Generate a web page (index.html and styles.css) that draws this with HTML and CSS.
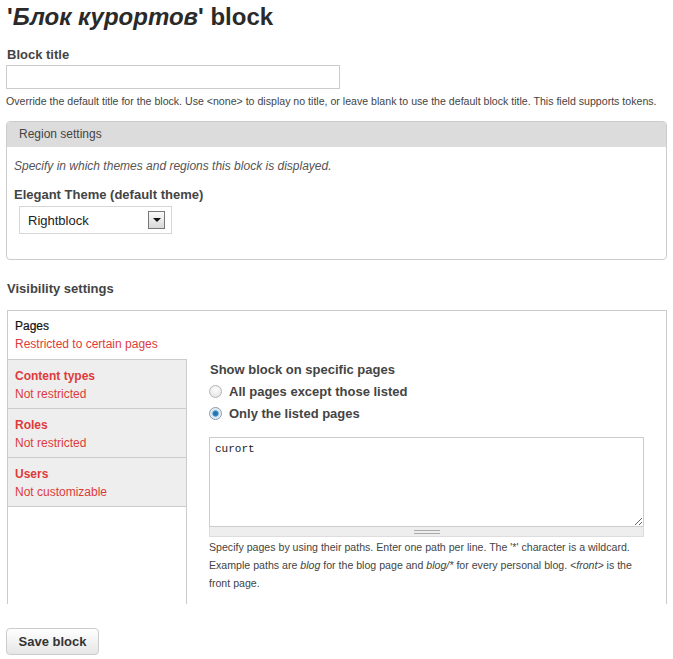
FILE: index.html
```html
<!DOCTYPE html>
<html lang="ru">

<head>
    <meta charset="UTF-8">
    <title>'Блок курортов' block</title>
    <link rel="stylesheet" href="styles.css">
</head>

<body>
    <div class="page">
        <h1>'<em>Блок курортов</em>' block</h1>

        <div class="form-item">
            <label class="label">Block title</label>
            <input class="text" type="text" value="">
            <div class="desc">Override the default title for the block. Use &lt;none&gt; to display no title, or leave blank to use the default block title. This field supports tokens.</div>
        </div>

        <div class="fieldset">
            <div class="legend">Region settings</div>
            <div class="fieldset-body">
                <p class="help">Specify in which themes and regions this block is displayed.</p>
                <label class="label">Elegant Theme (default theme)</label>
                <div class="select">
                    <span>Rightblock</span>
                    <span class="arrow"></span>
                </div>
            </div>
        </div>

        <h2>Visibility settings</h2>

        <div class="vtabs">
            <div class="vtabs-list">
                <ul>
                    <li class="active"><strong>Pages</strong><span>Restricted to certain pages</span></li>
                    <li><strong>Content types</strong><span>Not restricted</span></li>
                    <li><strong>Roles</strong><span>Not restricted</span></li>
                    <li><strong>Users</strong><span>Not customizable</span></li>
                </ul>
                <div class="filler"></div>
            </div>
            <div class="vtabs-pane">
                <div class="label">Show block on specific pages</div>
                <div class="radio-row"><span class="radio"></span>All pages except those listed</div>
                <div class="radio-row"><span class="radio checked"></span>Only the listed pages</div>
                <textarea class="pages" spellcheck="false">curort</textarea>
                <div class="grip"><span></span></div>
                <div class="desc pane-desc">Specify pages by using their paths. Enter one path per line. The '*' character is a wildcard. Example paths are <em>blog</em> for the blog page and <em>blog/*</em> for every personal blog. <em>&lt;front&gt;</em> is the front page.</div>
            </div>
        </div>

        <button class="btn">Save block</button>
    </div>
</body>

</html>
```

FILE: styles.css
```css
* {
    margin: 0;
    padding: 0;
    box-sizing: border-box;
}

body {
    font-family: "Liberation Sans", Arial, sans-serif;
    color: #333;
    background: #fff;
}

.page {
    padding: 5px 7px 0 6px;
}

h1 {
    font-size: 24px;
    line-height: 24px;
    color: #2a2a2a;
    padding-left: 1px;
}

h1 em {
    font-style: italic;
}

.form-item {
    margin-top: 18px;
}

.label {
    display: block;
    font-size: 13px;
    font-weight: bold;
    line-height: 16px;
    color: #444;
    padding-left: 1px;
}

input.text {
    display: block;
    width: 334px;
    height: 24px;
    margin-top: 2px;
    border: 1px solid #ccc;
    font-size: 13px;
    padding: 0 4px;
}

.desc {
    font-size: 10.6px;
    line-height: 18px;
    color: #444;
    margin-top: 3px;
}

/* region settings */
.fieldset {
    margin-top: 11px;
    border: 1px solid #ccc;
    border-radius: 4px;
    width: 661px;
    height: 139px;
    overflow: hidden;
}

.legend {
    background: #dcdcdc;
    height: 25px;
    line-height: 24px;
    padding-left: 12px;
    font-size: 12px;
    color: #444;
}

.fieldset-body {
    padding: 11px 7px 0 7px;
}

.help {
    font-size: 12px;
    font-style: italic;
    color: #555;
    line-height: 16px;
}

.fieldset-body .label {
    margin-top: 13px;
    padding-left: 0;
}

.select {
    display: flex;
    align-items: center;
    justify-content: space-between;
    width: 153px;
    height: 28px;
    margin: 3px 0 0 5px;
    border: 1px solid #d6d6d6;
    padding: 0 6px 0 8px;
    font-size: 13px;
    color: #222;
}

.select .arrow {
    width: 17px;
    height: 18px;
    border: 1px solid #777;
    background: linear-gradient(#fafafa, #d8d8d8);
    position: relative;
}

.select .arrow::after {
    content: "";
    position: absolute;
    left: 4px;
    top: 6px;
    border-left: 4px solid transparent;
    border-right: 4px solid transparent;
    border-top: 4px solid #111;
}

h2 {
    font-size: 13px;
    line-height: 16px;
    color: #444;
    margin-top: 21px;
    padding-left: 1px;
}

/* vertical tabs */
.vtabs {
    display: flex;
    width: 660px;
    height: 294px;
    margin: 13px 0 0 1px;
    border: 1px solid #ccc;
    border-bottom: none;
}

.vtabs-list {
    width: 179px;
    display: flex;
    flex-direction: column;
}

.vtabs-list ul {
    list-style: none;
}

.vtabs-list li {
    height: 49px;
    padding: 7px 0 0 7px;
    background: #eee;
    border-top: 1px solid #ccc;
    border-right: 1px solid #ccc;
    font-size: 12px;
    line-height: 18px;
    color: #dd3b3b;
}

.vtabs-list li:first-child {
    border-top: none;
    height: 48px;
    padding-top: 6px;
}

.vtabs-list li.active {
    background: #fff;
    border-right-color: #fff;
}

.vtabs-list li strong {
    display: block;
}

.vtabs-list li.active strong {
    color: #111;
    font-weight: normal;
    -webkit-text-stroke: 0.2px #111;
}

.vtabs-list li span {
    display: block;
}

.filler {
    flex: 1;
    border-top: 1px solid #ccc;
    border-right: 1px solid #ccc;
}

.vtabs-pane {
    flex: 1;
    padding: 51px 22px 0 22px;
}

.vtabs-pane .label {
    padding-left: 1px;
}

.radio-row {
    display: flex;
    align-items: center;
    gap: 7px;
    margin-top: 5px;
    height: 17px;
    font-size: 13px;
    font-weight: bold;
    color: #444;
}

.radio {
    width: 13px;
    height: 13px;
    border-radius: 50%;
    border: 1px solid #b5b5b5;
    background: radial-gradient(circle at 50% 35%, #fff, #ddd);
}

.radio.checked {
    border-color: #8a9aa8;
    background: radial-gradient(circle, #1f6aa0 0, #2a85c4 2.5px, #cfe0ec 3.5px, #f4f8fb 6px);
}

textarea.pages {
    display: block;
    width: 435px;
    height: 90px;
    margin-top: 15px;
    border: 1px solid #ccc;
    padding: 5px 5px;
    font-family: "Liberation Mono", "Courier New", monospace;
    font-size: 11px;
    color: #222;
    resize: vertical;
    outline: none;
}

.grip {
    width: 435px;
    height: 10px;
    background: #eee;
    border: 1px solid #ddd;
    border-top: none;
    display: flex;
    justify-content: center;
    align-items: center;
}

.grip span {
    width: 26px;
    height: 4px;
    border-top: 1px solid #aaa;
    border-bottom: 1px solid #aaa;
}

.pane-desc {
    margin-top: 1px;
    line-height: 18px;
    width: 435px;
    color: #444;
}

.btn {
    display: block;
    margin-top: 24px;
    width: 93px;
    height: 27px;
    border: 1px solid #ccc;
    border-radius: 4px;
    background: linear-gradient(#fff, #e6e6e6);
    font-family: "Liberation Sans", Arial, sans-serif;
    font-size: 13px;
    font-weight: bold;
    color: #333;
}
```
